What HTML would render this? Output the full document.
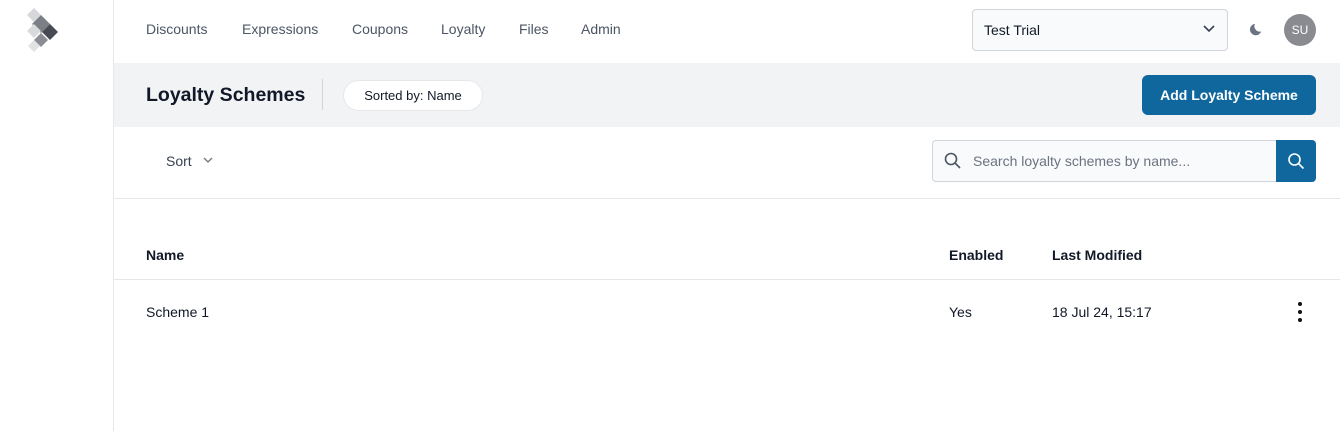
<!DOCTYPE html><html><head><style>
*{box-sizing:border-box;margin:0;padding:0}
body{width:1340px;height:431px;background:#fff;font-family:"Liberation Sans",sans-serif;color:#111827;position:relative;overflow:hidden}
.side{position:absolute;left:0;top:0;width:114px;height:431px;border-right:1px solid #e5e7eb}
.a{position:absolute}
.nav{top:21px;font-size:14px;color:#4b5563}
</style></head><body>
<div class="side">
<svg class="a" style="left:24px;top:6px" width="36" height="48" viewBox="0 0 36 48">
<polygon points="10,2 17,9 10,16 3,9" fill="#d6d7da"/>
<polygon points="17,9 26,18 17,27 8,18" fill="#7c7f86"/>
<polygon points="26,18 34,26 26,34 18,26" fill="#474a52"/>
<polygon points="10,18 17,25 10,32 3,25" fill="#d9dadc"/>
<polygon points="17,27 24,34 17,41 10,34" fill="#8a8d93"/>
<polygon points="10,34 16,40 10,46 4,40" fill="#e1e2e4"/>
</svg></div>
<div class="a nav" style="left:146px">Discounts</div>
<div class="a nav" style="left:242px">Expressions</div>
<div class="a nav" style="left:352px">Coupons</div>
<div class="a nav" style="left:441px">Loyalty</div>
<div class="a nav" style="left:519px">Files</div>
<div class="a nav" style="left:581px">Admin</div>
<div class="a" style="left:972px;top:9px;width:256px;height:42px;border:1px solid #d1d5db;border-radius:4px;background:#f9fafb;font-size:14px;padding:12px 11px">Test Trial
<svg class="a" style="right:12px;top:15px" width="12" height="8" viewBox="0 0 12 8"><path d="M1 1l5 5 5-5" stroke="#374151" stroke-width="1.6" fill="none"/></svg></div>
<svg class="a" style="left:1247px;top:22px" width="16" height="16" viewBox="0 0 18 18"><path d="M9 2a6.5 6.5 0 1 0 7 8.5A6 6 0 0 1 9 2z" fill="#6b7280"/></svg>
<div class="a" style="left:1284px;top:14px;width:32px;height:32px;border-radius:50%;background:#898b91;color:#fff;font-size:12px;text-align:center;line-height:32px">SU</div>
<div class="a" style="left:114px;top:63px;width:1226px;height:64px;background:#f2f3f5"></div>
<div class="a" style="left:146px;top:84px;font-size:19.5px;font-weight:bold">Loyalty Schemes</div>
<div class="a" style="left:322px;top:79px;width:1px;height:31px;background:#d1d5db"></div>
<div class="a" style="left:343px;top:80px;width:140px;height:31px;border:1px solid #e5e7eb;border-radius:16px;background:#fff;font-size:13px;text-align:center;line-height:29px">Sorted by: Name</div>
<div class="a" style="left:1142px;top:75px;width:174px;height:40px;border-radius:6px;background:#10679e;color:#fff;font-weight:bold;font-size:14px;text-align:center;line-height:40px">Add Loyalty Scheme</div>
<div class="a" style="left:166px;top:153px;font-size:14px;color:#374151">Sort</div>
<svg class="a" style="left:203px;top:157px" width="10" height="7" viewBox="0 0 10 7"><path d="M1 1l4 4 4-4" stroke="#6b7280" stroke-width="1.3" fill="none"/></svg>
<div class="a" style="left:932px;top:140px;width:345px;height:42px;border:1px solid #d1d5db;border-right:none;border-radius:4px 0 0 4px;background:#f9fafb;font-size:14px;color:#6b7280;padding:12px 0 0 40px">Search loyalty schemes by name...</div>
<svg class="a" style="left:944px;top:152px" width="17" height="17" viewBox="0 0 17 17"><circle cx="7" cy="7" r="5.5" stroke="#4b5563" stroke-width="1.6" fill="none"/><path d="M11 11l5 5" stroke="#4b5563" stroke-width="1.6"/></svg>
<div class="a" style="left:1276px;top:140px;width:40px;height:42px;background:#10679e;border-radius:0 4px 4px 0"></div>
<svg class="a" style="left:1287px;top:152px" width="18" height="18" viewBox="0 0 18 18"><circle cx="7.5" cy="7.5" r="5.5" stroke="#fff" stroke-width="1.6" fill="none"/><path d="M11.5 11.5l5 5" stroke="#fff" stroke-width="1.6"/></svg>
<div class="a" style="left:114px;top:198px;width:1226px;height:1px;background:#e5e7eb"></div>
<div class="a" style="left:146px;top:247px;font-size:14px;font-weight:bold">Name</div>
<div class="a" style="left:949px;top:247px;font-size:14px;font-weight:bold">Enabled</div>
<div class="a" style="left:1052px;top:247px;font-size:14px;font-weight:bold">Last Modified</div>
<div class="a" style="left:114px;top:279px;width:1226px;height:1px;background:#e5e7eb"></div>
<div class="a" style="left:146px;top:304px;font-size:14px">Scheme 1</div>
<div class="a" style="left:949px;top:304px;font-size:14px">Yes</div>
<div class="a" style="left:1052px;top:304px;font-size:14px">18 Jul 24, 15:17</div>
<div class="a" style="left:1298px;top:302px;width:4px;height:4px;border-radius:50%;background:#111"></div>
<div class="a" style="left:1298px;top:310px;width:4px;height:4px;border-radius:50%;background:#111"></div>
<div class="a" style="left:1298px;top:318px;width:4px;height:4px;border-radius:50%;background:#111"></div>
</body></html>
